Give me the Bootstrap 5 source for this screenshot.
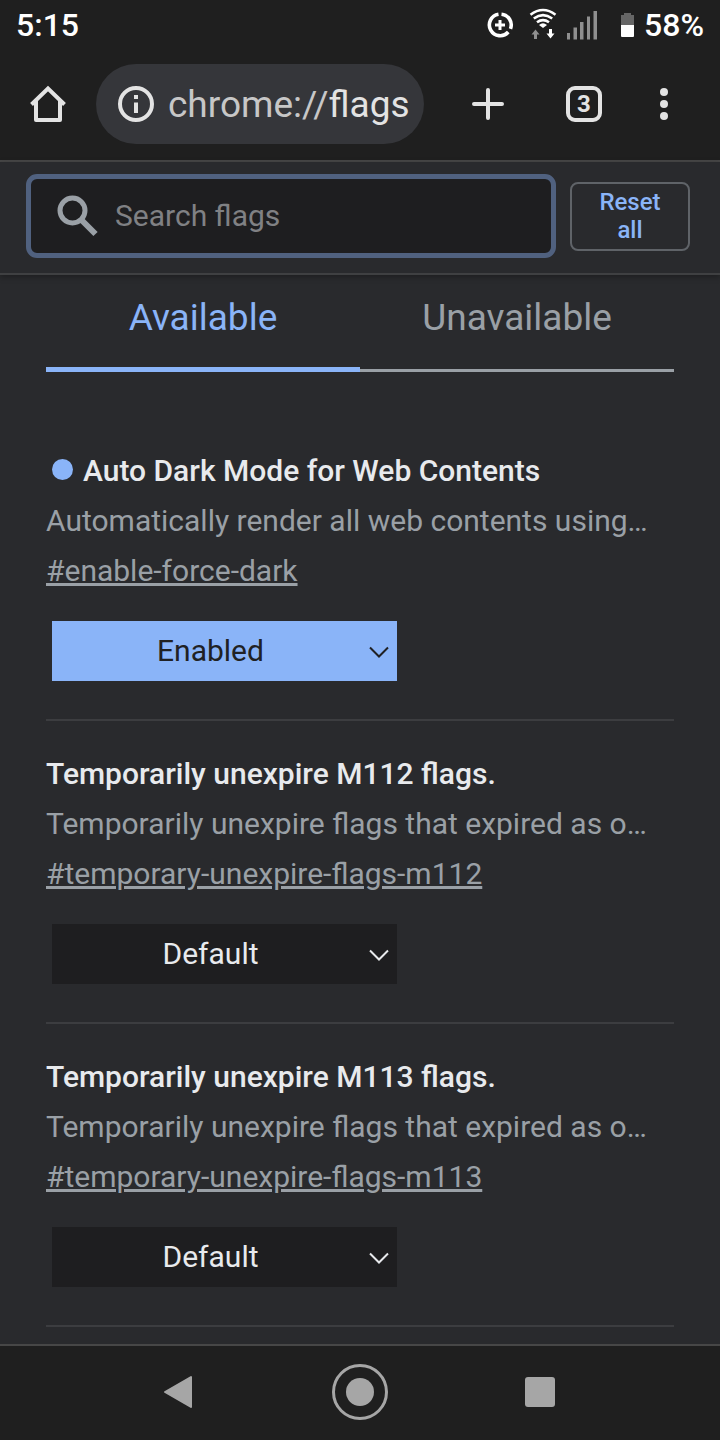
<!DOCTYPE html>
<html lang="en">
<head>
<meta charset="utf-8">
<meta name="viewport" content="width=device-width, initial-scale=1">
<title>Experiments</title>
<link href="https://cdn.jsdelivr.net/npm/bootstrap@5.3.0/dist/css/bootstrap.min.css" rel="stylesheet">
<style>
  body { background: #292a2d; color: #e8eaed; font-family: Roboto, "Liberation Sans", sans-serif; font-size: 30px; line-height: 50px; }
  .chrome-bg { background: #1f1f1f; }
  .rule-top { border-top: 2px solid #474747; }
  .rule-bottom { border-bottom: 2px solid #474747; }
  .status { height: 48px; padding: 2px 16px 0; font-size: 32px; font-weight: 500; color: #fff; line-height: 46px; }
  .toolbar { height: 112px; padding: 0 20px 0 12px; }
  .icon-btn { display: flex; align-items: center; justify-content: center; width: 72px; height: 80px; padding: 0; border: 0; background: none; color: #e3e3e3; font-size: 24px; }
  .omnibox { flex: 1 1 0; min-width: 0; height: 80px; margin: 0 28px 0 12px; padding: 0 12px 0 20px; border-radius: 40px; background: #35363a; gap: 12px; }
  .url { font-size: 37px; padding-top: 2px; color: #c7c7c7; white-space: nowrap; }
  .url b { font-weight: 400; color: #e3e3e3; }
  .actions { gap: 16px; }
  .menu-group { gap: 8px; }
  .actions .icon-btn { width: 80px; }
  .actions .icon-btn:first-child { margin-left: -4px; }
  .actions .icon-btn:last-child { width: 72px; margin-left: -12px; }
  .tabs-count { width: 36px; height: 36px; border: 4px solid #e3e3e3; border-radius: 9px; font-weight: 700; line-height: 28px; }
  .search-bar { height: 113px; padding: 0 30px 3px 26px; gap: 14px; box-shadow: 0 2px 6px rgba(0,0,0,.3); border-bottom: 2px solid #3f4042; }
  .search-box { flex: 1 1 0; min-width: 0; height: 84px; border: 5px solid #50617f; border-radius: 11px; background: #1e1e20; padding-left: 23px; gap: 11px; }
  .search-box input { min-width: 0; background: none; border: 0; outline: 0; color: #e8eaed; line-height: 50px; }
  .search-box input::placeholder { color: #808184; opacity: 1; }
  .reset { width: 120px; height: 69px; padding: 0 20px; border: 2px solid #5f6368; border-radius: 8px; background: none; color: #8ab4f8; font-size: 24px; font-weight: 500; line-height: 28px; }
  .page-pad { padding: 0 46px; }
  .tab-row { height: 97px; margin-bottom: 46px; }
  .tab-btn { background: none; border: 0; border-bottom: 3px solid #9aa0a6; color: #9aa0a6; font-size: 37px; padding: 0 0 8px; }
  .tab-btn.active { border-bottom: 5px solid #8ab4f8; color: #8ab4f8; padding-bottom: 6px; }
  .flag { padding: 28px 0 38px; border-bottom: 2px solid #3c3d40; }
  .flag h2 { font-size: 30px; font-weight: 500; line-height: 50px; margin: 0; }
  .flag p { margin: 0; color: #9aa0a6; }
  .flag a { display: block; color: #9aa0a6; }
  .dot { width: 21px; height: 21px; border-radius: 50%; background: #8ab4f8; margin: 0 10px 4px 6px; }
  .pick { width: 345px; margin: 25px 0 0 6px; }
  .pick select { width: 100%; height: 60px; border: 0; border-radius: 0; appearance: none; background: #1e1e20; color: #e8eaed; text-align: center; text-align-last: center; padding: 0 36px 0 8px; line-height: 50px; }
  .pick svg { right: 8px; top: 25px; color: #e8eaed; pointer-events: none; }
  .pick.on select { background: #8ab4f8; color: #202124; }
  .pick.on svg { color: #202124; }
  .sysnav { height: 96px; padding: 0 90px 2px; margin-top: auto; }
  .sysnav button { width: 180px; height: 92px; color: #a6a6a6; }
</style>
</head>
<body>
<div class="d-flex flex-column min-vh-100">
  <header class="chrome-bg rule-bottom">
    <div class="status d-flex align-items-center justify-content-between">
      <span>5:15</span>
      <div class="d-flex align-items-center">
        <svg width="150" height="46" viewBox="486 1 150 46" fill="none">
          <g stroke="#fff" stroke-width="3.6">
            <path d="M501.500 13.200A10.800 10.800 0 0 1 510.500 27.800M508.300 31A10.800 10.800 0 1 1 498.500 13.200"/>
            <path d="M500 19v10M495 24h10" stroke-width="3"/>
          </g>
          <g stroke="#fff" stroke-width="2.600">
            <path d="M530.500 13.800Q543 4.200 555.500 13.800M533.800 17.500Q543 10.700 552.200 17.500M537 21.300Q543 17 549 21.300"/>
          </g>
          <path d="M539 24Q543 20.500 547 24L543 27Z" fill="#fff"/>
          <path d="M535.500 28.500l4 5h-2.500v4.500h-3v-4.500h-2.500z" fill="#8f8f8f"/>
          <path d="M550.500 37.500l4-5h-2.500v-4.500h-3v4.500h-2.500z" fill="#fff"/>
          <path d="M567 32h3v6.500h-3zM573.500 26.500h3.500v12h-3.500zM580 21h3.500v17.500h-3.500zM587 15.500h3v23h-3zM593.500 10h3.500v28.500h-3.500z" fill="#8f8f8f"/>
          <path d="M621 24V14h3v-2h7v2h3v10z" fill="#666"/>
          <path d="M621 24h13v11q0 1-1 1h-11q-1 0-1-1z" fill="#fff"/>
        </svg>
        <span class="ms-2">58%</span>
      </div>
    </div>
    <div class="toolbar d-flex align-items-center">
      <button class="icon-btn" aria-label="Home">
        <svg width="40" height="40" viewBox="0 0 40 40" fill="none" stroke="#e3e3e3" stroke-width="4" stroke-linejoin="round"><path d="M8 17V36H32V17"/><path d="M3.500 20.500L20 4.500L36.500 20.500" stroke-linejoin="miter"/></svg>
      </button>
      <div class="omnibox d-flex align-items-center">
        <svg class="flex-shrink-0" width="40" height="40" viewBox="0 0 40 40"><circle cx="20" cy="20" r="16" fill="none" stroke="#e3e3e3" stroke-width="4"/><path d="M18 11h4v4h-4zM18 18.500h4V29h-4z" fill="#e3e3e3"/></svg>
        <span class="url">chrome://<b>flags</b></span>
      </div>
      <div class="actions d-flex">
        <button class="icon-btn" aria-label="New tab">
          <svg width="32" height="32" viewBox="0 0 32 32" stroke="#e3e3e3" stroke-width="4" stroke-linecap="round"><path d="M16 2v28M2 16h28"/></svg>
        </button>
        <button class="icon-btn" aria-label="Open tabs"><span class="tabs-count">3</span></button>
        <button class="icon-btn" aria-label="Menu">
          <svg width="8" height="32" viewBox="0 0 8 32" fill="#e3e3e3"><circle cx="4" cy="4" r="4"/><circle cx="4" cy="16" r="4"/><circle cx="4" cy="28" r="4"/></svg>
        </button>
      </div>
    </div>
  </header>

  <div class="search-bar d-flex align-items-center">
    <div class="search-box d-flex align-items-center">
      <svg class="flex-shrink-0" width="50" height="50" viewBox="0 0 50 50" fill="none" stroke="#9aa0a6"><circle cx="18.500" cy="19.500" r="12.500" stroke-width="5"/><path d="M28 29.500L41.500 43" stroke-width="6"/></svg>
      <input class="flex-grow-1 p-0" type="search" aria-label="Search flags" placeholder="Search flags">
    </div>
    <button class="reset">Reset all</button>
  </div>

  <main class="page-pad">
    <div class="tab-row row g-0" role="tablist">
      <button class="tab-btn active col-6" role="tab" aria-selected="true">Available</button>
      <button class="tab-btn col-6" role="tab" aria-selected="false">Unavailable</button>
    </div>

    <section class="flag">
      <h2 class="d-flex align-items-center"><span class="dot"></span>Auto Dark Mode for Web Contents</h2>
      <p class="text-truncate">Automatically render all web contents using…</p>
      <a href="#enable-force-dark">#enable-force-dark</a>
      <div class="pick on position-relative">
        <select aria-label="Auto Dark Mode for Web Contents"><option>Default</option><option selected>Enabled</option><option>Disabled</option></select>
        <svg class="position-absolute" width="20" height="13" viewBox="0 0 20 13" fill="none" stroke="currentColor" stroke-width="2"><path d="M1 1.500L10 10.500L19 1.500"/></svg>
      </div>
    </section>

    <section class="flag">
      <h2>Temporarily unexpire M112 flags.</h2>
      <p class="text-truncate">Temporarily unexpire flags that expired as o…</p>
      <a href="#temporary-unexpire-flags-m112">#temporary-unexpire-flags-m112</a>
      <div class="pick position-relative">
        <select aria-label="Temporarily unexpire M112 flags."><option>Default</option><option>Enabled</option><option>Disabled</option></select>
        <svg class="position-absolute" width="20" height="13" viewBox="0 0 20 13" fill="none" stroke="currentColor" stroke-width="2"><path d="M1 1.500L10 10.500L19 1.500"/></svg>
      </div>
    </section>

    <section class="flag">
      <h2>Temporarily unexpire M113 flags.</h2>
      <p class="text-truncate">Temporarily unexpire flags that expired as o…</p>
      <a href="#temporary-unexpire-flags-m113">#temporary-unexpire-flags-m113</a>
      <div class="pick position-relative">
        <select aria-label="Temporarily unexpire M113 flags."><option>Default</option><option>Enabled</option><option>Disabled</option></select>
        <svg class="position-absolute" width="20" height="13" viewBox="0 0 20 13" fill="none" stroke="currentColor" stroke-width="2"><path d="M1 1.500L10 10.500L19 1.500"/></svg>
      </div>
    </section>
  </main>

  <nav class="sysnav chrome-bg rule-top d-flex justify-content-between" aria-label="System navigation">
    <button class="icon-btn" aria-label="Back"><svg width="36" height="36" viewBox="0 0 36 36" fill="currentColor" stroke="currentColor" stroke-width="2" stroke-linejoin="round"><path d="M3 18L29 3V33Z"/></svg></button>
    <button class="icon-btn" aria-label="Home screen"><svg width="56" height="56" viewBox="0 0 56 56"><circle cx="28" cy="28" r="26.500" fill="none" stroke="currentColor" stroke-width="3"/><circle cx="28" cy="28" r="14" fill="currentColor"/></svg></button>
    <button class="icon-btn" aria-label="Recent apps"><svg width="30" height="30" viewBox="0 0 30 30"><rect width="30" height="30" rx="3" fill="currentColor"/></svg></button>
  </nav>
</div>
<script src="https://cdn.jsdelivr.net/npm/bootstrap@5.3.0/dist/js/bootstrap.bundle.min.js"></script>
</body>
</html>
